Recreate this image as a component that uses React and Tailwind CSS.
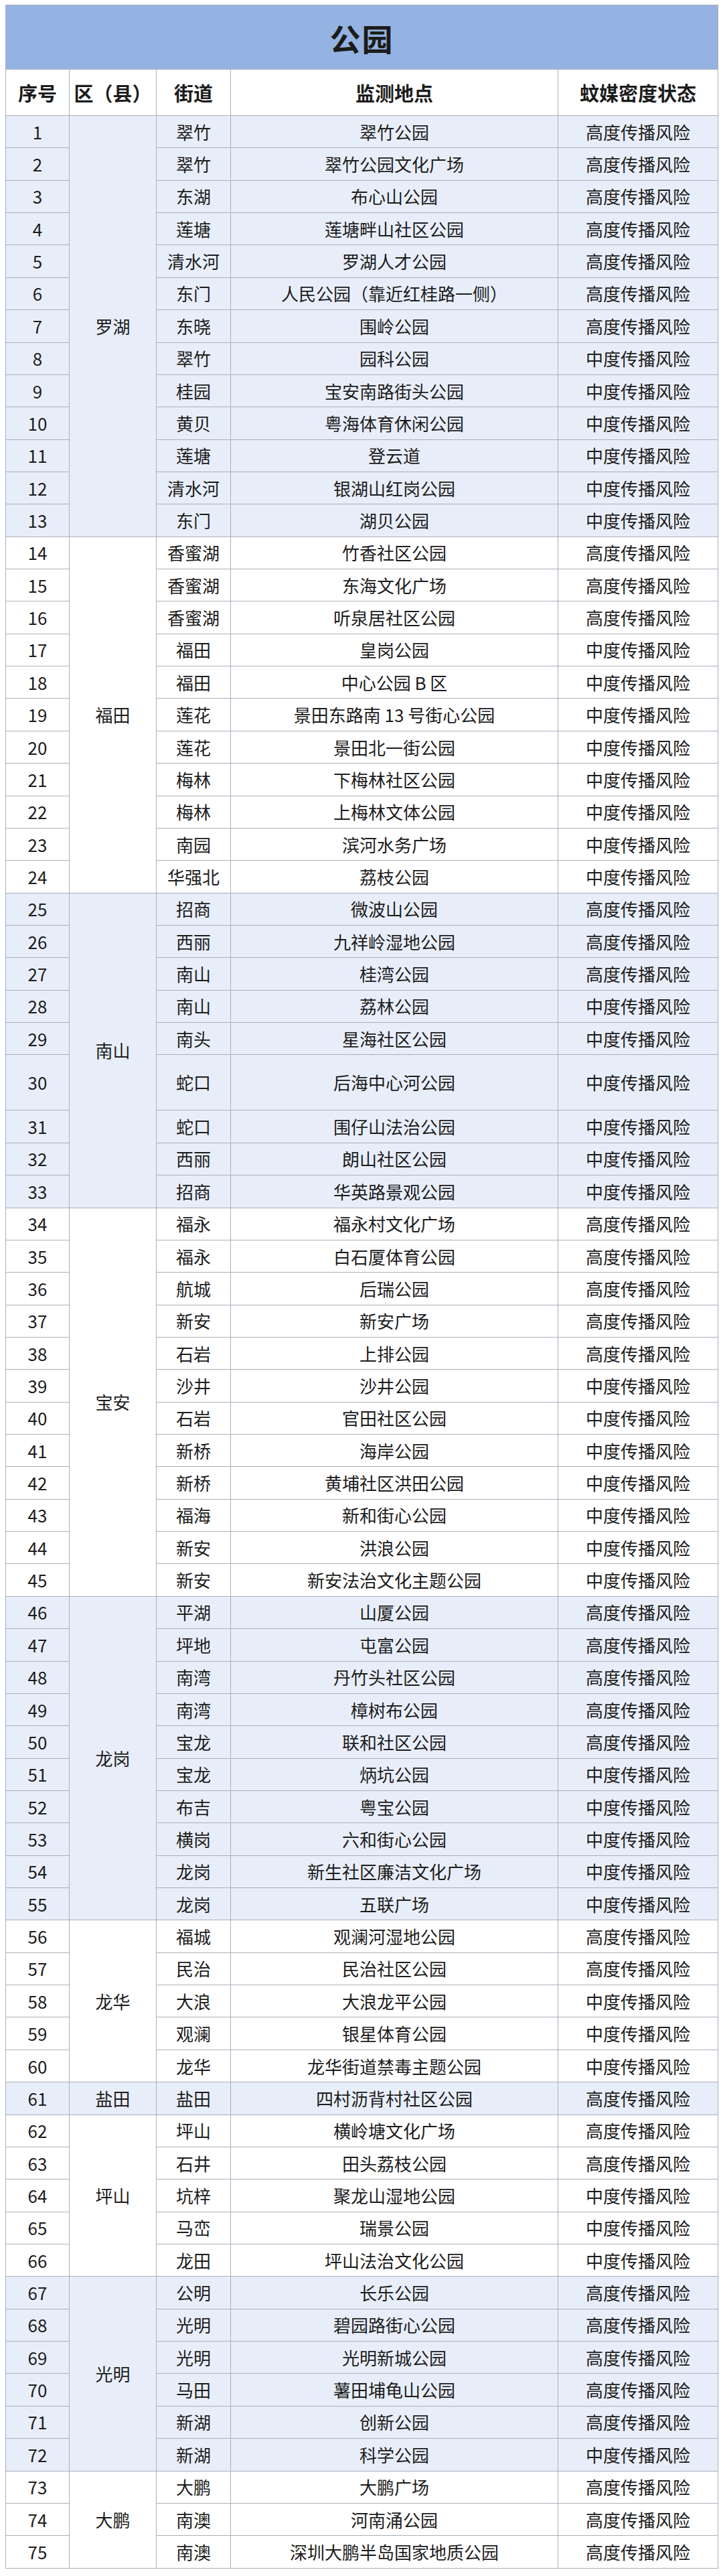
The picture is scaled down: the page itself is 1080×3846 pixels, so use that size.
import React from "react";

const groups = [
  {
    d: "罗湖",
    blue: true,
    rows: [
      [1, "翠竹", "翠竹公园", "高"],
      [2, "翠竹", "翠竹公园文化广场", "高"],
      [3, "东湖", "布心山公园", "高"],
      [4, "莲塘", "莲塘畔山社区公园", "高"],
      [5, "清水河", "罗湖人才公园", "高"],
      [6, "东门", "人民公园（靠近红桂路一侧）", "高"],
      [7, "东晓", "围岭公园", "高"],
      [8, "翠竹", "园科公园", "中"],
      [9, "桂园", "宝安南路街头公园", "中"],
      [10, "黄贝", "粤海体育休闲公园", "中"],
      [11, "莲塘", "登云道", "中"],
      [12, "清水河", "银湖山红岗公园", "中"],
      [13, "东门", "湖贝公园", "中"],
    ],
  },
  {
    d: "福田",
    blue: false,
    rows: [
      [14, "香蜜湖", "竹香社区公园", "高"],
      [15, "香蜜湖", "东海文化广场", "高"],
      [16, "香蜜湖", "听泉居社区公园", "高"],
      [17, "福田", "皇岗公园", "中"],
      [18, "福田", "中心公园 B 区", "中"],
      [19, "莲花", "景田东路南 13 号街心公园", "中"],
      [20, "莲花", "景田北一街公园", "中"],
      [21, "梅林", "下梅林社区公园", "中"],
      [22, "梅林", "上梅林文体公园", "中"],
      [23, "南园", "滨河水务广场", "中"],
      [24, "华强北", "荔枝公园", "中"],
    ],
  },
  {
    d: "南山",
    blue: true,
    rows: [
      [25, "招商", "微波山公园", "高"],
      [26, "西丽", "九祥岭湿地公园", "高"],
      [27, "南山", "桂湾公园", "高"],
      [28, "南山", "荔林公园", "中"],
      [29, "南头", "星海社区公园", "中"],
      [30, "蛇口", "后海中心河公园", "中", true],
      [31, "蛇口", "围仔山法治公园", "中"],
      [32, "西丽", "朗山社区公园", "中"],
      [33, "招商", "华英路景观公园", "中"],
    ],
  },
  {
    d: "宝安",
    blue: false,
    rows: [
      [34, "福永", "福永村文化广场", "高"],
      [35, "福永", "白石厦体育公园", "高"],
      [36, "航城", "后瑞公园", "高"],
      [37, "新安", "新安广场", "高"],
      [38, "石岩", "上排公园", "高"],
      [39, "沙井", "沙井公园", "中"],
      [40, "石岩", "官田社区公园", "中"],
      [41, "新桥", "海岸公园", "中"],
      [42, "新桥", "黄埔社区洪田公园", "中"],
      [43, "福海", "新和街心公园", "中"],
      [44, "新安", "洪浪公园", "中"],
      [45, "新安", "新安法治文化主题公园", "中"],
    ],
  },
  {
    d: "龙岗",
    blue: true,
    rows: [
      [46, "平湖", "山厦公园", "高"],
      [47, "坪地", "屯富公园", "高"],
      [48, "南湾", "丹竹头社区公园", "高"],
      [49, "南湾", "樟树布公园", "高"],
      [50, "宝龙", "联和社区公园", "高"],
      [51, "宝龙", "炳坑公园", "中"],
      [52, "布吉", "粤宝公园", "中"],
      [53, "横岗", "六和街心公园", "中"],
      [54, "龙岗", "新生社区廉洁文化广场", "中"],
      [55, "龙岗", "五联广场", "中"],
    ],
  },
  {
    d: "龙华",
    blue: false,
    rows: [
      [56, "福城", "观澜河湿地公园", "高"],
      [57, "民治", "民治社区公园", "高"],
      [58, "大浪", "大浪龙平公园", "中"],
      [59, "观澜", "银星体育公园", "中"],
      [60, "龙华", "龙华街道禁毒主题公园", "中"],
    ],
  },
  {
    d: "盐田",
    blue: true,
    rows: [[61, "盐田", "四村沥背村社区公园", "高"]],
  },
  {
    d: "坪山",
    blue: false,
    rows: [
      [62, "坪山", "横岭塘文化广场", "高"],
      [63, "石井", "田头荔枝公园", "高"],
      [64, "坑梓", "聚龙山湿地公园", "中"],
      [65, "马峦", "瑞景公园", "中"],
      [66, "龙田", "坪山法治文化公园", "中"],
    ],
  },
  {
    d: "光明",
    blue: true,
    rows: [
      [67, "公明", "长乐公园", "高"],
      [68, "光明", "碧园路街心公园", "高"],
      [69, "光明", "光明新城公园", "高"],
      [70, "马田", "薯田埔龟山公园", "高"],
      [71, "新湖", "创新公园", "高"],
      [72, "新湖", "科学公园", "中"],
    ],
  },
  {
    d: "大鹏",
    blue: false,
    rows: [
      [73, "大鹏", "大鹏广场", "高"],
      [74, "南澳", "河南涌公园", "高"],
      [75, "南澳", "深圳大鹏半岛国家地质公园", "高"],
    ],
  },
];

const cell = "border border-[#a9b0bb] text-center align-middle p-0";

export default function App() {
  return (
    <div
      className="bg-white w-[1080px] min-h-[3846px] px-[8px] pt-[7px] text-[#1c1c1c]"
      style={{ fontFamily: '"Noto Sans CJK SC", "Noto Sans", sans-serif' }}
    >
      <table className="w-[1064px] table-fixed border-collapse">
        <colgroup>
          <col className="w-[95px]" />
          <col className="w-[130px]" />
          <col className="w-[111px]" />
          <col className="w-[489px]" />
          <col className="w-[239px]" />
        </colgroup>
        <tbody>
          <tr className="h-[96px] bg-[#95b3e2]">
            <td colSpan={5} className={`${cell} text-[46px] font-bold leading-none tracking-[2px]`}>
              公园
            </td>
          </tr>
          <tr className="h-[69px] bg-white text-[29px] font-bold leading-none">
            <td className={cell}>序号</td>
            <td className={cell}>区（县）</td>
            <td className={cell}>街道</td>
            <td className={cell}>监测地点</td>
            <td className={cell}>蚊媒密度状态</td>
          </tr>
          {groups.map((g) =>
            g.rows.map((r, i) => (
              <tr
                key={r[0]}
                className={`${r[4] ? "h-[83px]" : "h-[48.36px]"} ${
                  g.blue ? "bg-[#e8eef9]" : "bg-white"
                } text-[26px] leading-none`}
              >
                <td className={cell}>{r[0]}</td>
                {i === 0 && (
                  <td className={cell} rowSpan={g.rows.length}>
                    {g.d}
                  </td>
                )}
                <td className={cell}>{r[1]}</td>
                <td className={cell}>{r[2]}</td>
                <td className={cell}>{r[3] === "高" ? "高度传播风险" : "中度传播风险"}</td>
              </tr>
            ))
          )}
        </tbody>
      </table>
    </div>
  );
}
